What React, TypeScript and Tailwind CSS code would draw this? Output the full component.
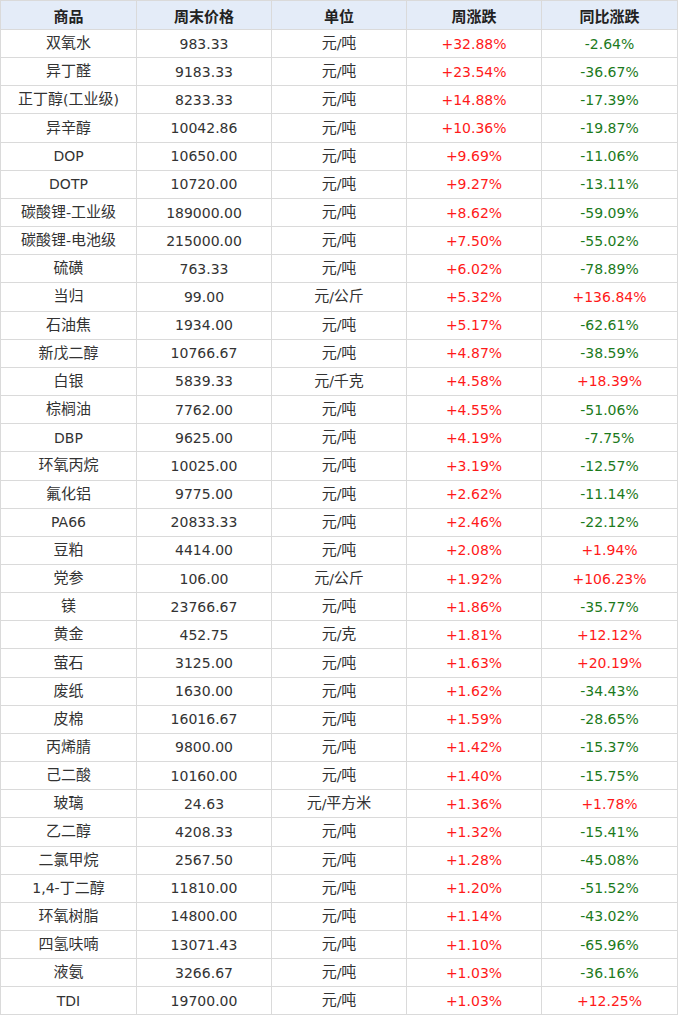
import React from "react";

type Row = [string, string, string, string, string];

const rows: Row[] = [
  ["双氧水", "983.33", "元/吨", "+32.88%", "-2.64%"],
  ["异丁醛", "9183.33", "元/吨", "+23.54%", "-36.67%"],
  ["正丁醇(工业级)", "8233.33", "元/吨", "+14.88%", "-17.39%"],
  ["异辛醇", "10042.86", "元/吨", "+10.36%", "-19.87%"],
  ["DOP", "10650.00", "元/吨", "+9.69%", "-11.06%"],
  ["DOTP", "10720.00", "元/吨", "+9.27%", "-13.11%"],
  ["碳酸锂-工业级", "189000.00", "元/吨", "+8.62%", "-59.09%"],
  ["碳酸锂-电池级", "215000.00", "元/吨", "+7.50%", "-55.02%"],
  ["硫磺", "763.33", "元/吨", "+6.02%", "-78.89%"],
  ["当归", "99.00", "元/公斤", "+5.32%", "+136.84%"],
  ["石油焦", "1934.00", "元/吨", "+5.17%", "-62.61%"],
  ["新戊二醇", "10766.67", "元/吨", "+4.87%", "-38.59%"],
  ["白银", "5839.33", "元/千克", "+4.58%", "+18.39%"],
  ["棕榈油", "7762.00", "元/吨", "+4.55%", "-51.06%"],
  ["DBP", "9625.00", "元/吨", "+4.19%", "-7.75%"],
  ["环氧丙烷", "10025.00", "元/吨", "+3.19%", "-12.57%"],
  ["氟化铝", "9775.00", "元/吨", "+2.62%", "-11.14%"],
  ["PA66", "20833.33", "元/吨", "+2.46%", "-22.12%"],
  ["豆粕", "4414.00", "元/吨", "+2.08%", "+1.94%"],
  ["党参", "106.00", "元/公斤", "+1.92%", "+106.23%"],
  ["镁", "23766.67", "元/吨", "+1.86%", "-35.77%"],
  ["黄金", "452.75", "元/克", "+1.81%", "+12.12%"],
  ["萤石", "3125.00", "元/吨", "+1.63%", "+20.19%"],
  ["废纸", "1630.00", "元/吨", "+1.62%", "-34.43%"],
  ["皮棉", "16016.67", "元/吨", "+1.59%", "-28.65%"],
  ["丙烯腈", "9800.00", "元/吨", "+1.42%", "-15.37%"],
  ["己二酸", "10160.00", "元/吨", "+1.40%", "-15.75%"],
  ["玻璃", "24.63", "元/平方米", "+1.36%", "+1.78%"],
  ["乙二醇", "4208.33", "元/吨", "+1.32%", "-15.41%"],
  ["二氯甲烷", "2567.50", "元/吨", "+1.28%", "-45.08%"],
  ["1,4-丁二醇", "11810.00", "元/吨", "+1.20%", "-51.52%"],
  ["环氧树脂", "14800.00", "元/吨", "+1.14%", "-43.02%"],
  ["四氢呋喃", "13071.43", "元/吨", "+1.10%", "-65.96%"],
  ["液氨", "3266.67", "元/吨", "+1.03%", "-36.16%"],
  ["TDI", "19700.00", "元/吨", "+1.03%", "+12.25%"],
];

const CJK = /([\u3000-\u9fff\uff00-\uffef]+)/;

function T({ text }: { text: string }) {
  const parts = text.split(CJK).filter((p) => p.length > 0);
  return (
    <>
      {parts.map((p, i) =>
        CJK.test(p) ? (
          <span key={i} className="text-[15px]">
            {p}
          </span>
        ) : (
          <span key={i} className="text-[14px]">
            {p}
          </span>
        )
      )}
    </>
  );
}

const cellBase =
  "flex items-center justify-center border-r border-b border-[#dadada] whitespace-nowrap leading-none";

function Cell({ text, color }: { text: string; color?: string }) {
  return (
    <div className={`${cellBase} ${color ?? "text-[#333333]"}`}>
      <T text={text} />
    </div>
  );
}

function pctColor(v: string) {
  return v.startsWith("+") ? "text-[#ff1a1a]" : "text-[#1c7a1c]";
}

export default function App() {
  const headers = ["商品", "周末价格", "单位", "周涨跌", "同比涨跌"];
  return (
    <div
      className="w-[680px] h-[1020px] bg-white"
      style={{ fontFamily: '"DejaVu Sans", "Noto Sans CJK SC", sans-serif' }}
    >
      <div className="w-[678px] border-l border-t border-[#dadada]">
        <div className="grid grid-cols-[136px_135px_135px_135px_136px] h-[29px] bg-[#e4ecf8]">
          {headers.map((h) => (
            <div
              key={h}
              className={`${cellBase} font-bold text-[#222222] text-[15px]`}
              style={{ fontFamily: '"Noto Sans CJK SC", sans-serif' }}
            >
              {h}
            </div>
          ))}
        </div>
        {rows.map((r) => (
          <div
            key={r[0]}
            className="grid grid-cols-[136px_135px_135px_135px_136px] h-[28.17px]"
          >
            <Cell text={r[0]} />
            <Cell text={r[1]} />
            <Cell text={r[2]} />
            <Cell text={r[3]} color={pctColor(r[3])} />
            <Cell text={r[4]} color={pctColor(r[4])} />
          </div>
        ))}
      </div>
    </div>
  );
}
